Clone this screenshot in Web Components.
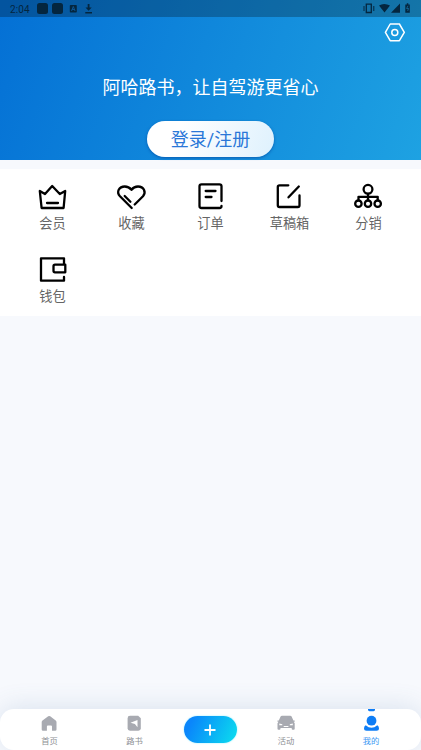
<!DOCTYPE html>
<html lang="zh-CN">
<head>
<meta charset="utf-8">
<title>我的</title>
<style>
html,body{margin:0;height:100%}
body{font-family:Roboto,"Noto Sans CJK SC",sans-serif;background:#f7f9fd;overflow:hidden}
</style>
</head>
<body>
<profile-page></profile-page>
<script>
function define(name, html) {
  const template = document.createElement('template');
  template.innerHTML = html;
  customElements.define(name, class extends HTMLElement {
    constructor() {
      super();
      this.attachShadow({mode: 'open'}).appendChild(template.content.cloneNode(true));
    }
  });
}

define('status-bar', `<style>
:host{display:flex;justify-content:space-between;height:17px;background:rgba(0,0,0,.25);color:#04263f}
.l{display:flex;align-items:center;padding-left:10px;font-size:10px;line-height:17px;letter-spacing:.1px}
.l span{padding-top:1px}
svg{display:block;fill:currentColor}
</style>
<div class="l"><span>2:04</span></div>
<svg width="58" height="17" viewBox="363 0 58 17"><path d="M366.3 4.2h5v8.3h-5z" fill="none" stroke="currentColor" stroke-width="1.3"/><path d="M364 6v5M373.8 6v5" stroke="currentColor"/><path d="M379 5.5q5-3 11 0l-5.500 7zM400 3.500v9.300h-9zM406.800 3.300h1.500v1.200h1.500v8.300h-4.500V4.500h1.500z"/><path d="M408 5.800l-1.400 2.700h1.900l-.8 2.400" stroke="#1672a3" stroke-width=".8" fill="none"/></svg>`);

define('status-icons', `<style>:host{display:block;margin-left:6px}svg{display:block;fill:currentColor}</style>
<svg width="60" height="17" viewBox="36 0 60 17"><rect x="37" y="3" width="11" height="11" rx="2.500"/><rect x="52" y="3" width="11" height="11" rx="2.500"/><rect x="69.800" y="5" width="7" height="7.500" rx=".8"/><path d="M71.500 11l1.800-4.500 1.800 4.500M72.100 9.500h2.400" stroke="#0c589a" fill="none" stroke-width=".9"/><path d="M87.700 4h1.800v3.500h2.200l-3.100 3.300-3.100-3.300h2.200zM85.300 12h6.700v1.400h-6.700z"/></svg>`);

define('login-button', `<style>
:host{display:block;width:127px;height:36px;border-radius:18px;background:linear-gradient(110deg,#fff 25%,#def1fd);box-shadow:0 1px 3px rgba(0,60,150,.6);color:#2a77d8;font-size:18px;line-height:38px;text-align:center}
</style><slot></slot>`);

define('page-header', `<style>
:host{display:flex;flex-direction:column;height:160px;background:linear-gradient(110.800deg,#0470d5,#1ea2e2);color:#fff}
.gear{display:flex;justify-content:flex-end;height:32px;padding:5px 15px 0 0;box-sizing:border-box}
svg{display:block}
p{margin:24px 0 0;font-size:18px;line-height:30px;text-align:center}
login-button{margin:18px auto 0}
</style>
<status-bar></status-bar>
<div class="gear"><svg width="22" height="21" viewBox="0 0 22 21" fill="none" stroke="#fff" stroke-width="1.500" stroke-linejoin="round"><path d="M6.200 2h9.200l4.900 8.400-4.900 8.300H6.200L1.400 10.400z"/><circle cx="10.800" cy="10.500" r="3"/></svg></div>
<p><slot></slot></p>
<login-button>登录/注册</login-button>`);

define('menu-item', `<style>
:host{display:flex;flex-direction:column;align-items:center;height:73px;font-size:13.200px;line-height:20px;color:#656565}
::slotted(svg){display:block;width:33px;height:32px;margin-bottom:2px;fill:none;stroke:#000;stroke-width:2.300;stroke-linecap:round;stroke-linejoin:round}
</style><slot name="icon"></slot><span><slot></slot></span>`);

define('menu-grid', `<style>
:host{display:grid;grid-template-columns:repeat(5,79px);align-content:start;margin-top:9px;padding:11px 13px 0;height:147px;box-sizing:border-box;background:#fff}
</style>
<menu-item><svg slot="icon" viewBox="0 0 33 32"><path d="M3.800 11l5.200 3 7.200-8 7.600 8 5.400-3-1.600 17h-22zM11 23h11"/></svg>会员</menu-item>
<menu-item><svg slot="icon" viewBox="0 0 33 32"><path d="M16.700 28L5 16.300C1 12 4 6.500 9.800 6.500c3 0 5 1.300 6.700 3.300C18 7.800 20 6.500 23 6.500c5.800 0 8.500 5.500 5 9.800l-8.300 8.200M9.700 16l5.700 5.700"/></svg>收藏</menu-item>
<menu-item><svg slot="icon" viewBox="0 0 33 32"><path d="M27.500 21V6.300q0-2-2-2h-18q-2 0-2 2V26q0 2 2 2h18q2 0 2-2M11.700 11h9.800M11.700 17h5.800"/></svg>订单</menu-item>
<menu-item><svg slot="icon" viewBox="0 0 33 32"><path d="M15.300 5.300H6.500q-1.700 0-1.700 1.700v18.300q0 1.700 1.700 1.700h18.300q1.700 0 1.700-1.700V15.500M15.500 17.300L25.800 6.500"/></svg>草稿箱</menu-item>
<menu-item><svg slot="icon" viewBox="0 0 33 32"><circle cx="16" cy="9.300" r="4.400"/><path d="M16 14v6M6.500 20v-3.200h19.200V20"/><circle cx="6.400" cy="23.700" r="3.200"/><circle cx="16" cy="23.700" r="3.200"/><circle cx="25.700" cy="23.700" r="3.200"/></svg>分销</menu-item>
<menu-item><svg slot="icon" viewBox="0 0 33 32"><path d="M28 10.700V5.300H5v22.400h23V24M19 11.700h10.300v7.600H19q-1.500 0-1.500-1.500v-4.600q0-1.500 1.500-1.500z"/></svg>钱包</menu-item>`);

define('nav-item', `<style>
:host{display:flex;flex-direction:column;align-items:center;font-size:8.300px;line-height:12px;color:#8d8f94}
:host([active]){color:#3c98f3}
::slotted(svg){display:block;width:25px;height:26px;fill:#a8aab1}
</style><slot name="icon"></slot><span><slot></slot></span>`);

define('tab-bar', `<style>
:host{display:grid;grid-template-columns:85px 85px 66px 86px 84px;padding-left:7px;height:41px;background:#fff;border-radius:14px;box-shadow:0 -2px 26px rgba(70,110,160,.16)}
.add{display:flex;justify-content:center;align-items:center;width:53px;height:27px;margin:7px auto 0;border-radius:14px;background:linear-gradient(115deg,#0a86fb 15%,#0bdfee);box-shadow:0 0 2px #8eefff}
</style>
<nav-item><svg slot="icon" viewBox="0 0 25 26"><path d="M11.200 7.300q1-.7 2 0l5.500 4.300q.8.600.8 1.500v7.300q0 1.300-1.300 1.300H15v-4.200q0-1-1-1h-3.100q-1 0-1 1v4.200H6q-1.300 0-1.300-1.300v-7.300q0-.9.800-1.500z"/></svg>首页</nav-item>
<nav-item><svg slot="icon" viewBox="0 0 25 26"><path d="M8 6.800h8.200l2.600 2.500v10q0 2.400-2.400 2.400H8q-2.400 0-2.400-2.400V9.200Q5.600 6.800 8 6.800z"/><path d="M8.500 13.800l7-2.800v7.300l-2.600-3.200z" fill="#fff"/></svg>路书</nav-item>
<div class="add"><svg width="12" height="12" viewBox="0 0 12 12"><path d="M6 .5v11M.5 6h11" stroke="#fff" stroke-width="1.800"/></svg></div>
<nav-item><svg slot="icon" viewBox="0 0 25 26"><path d="M6.600 7.500Q7 6.800 8 6.800h8.200q1 0 1.400.7l1.800 4h1.300v1.300h-1l1 1.500v5.500q0 1-1 1h-1q-1 0-1-1V19H6.500v.8q0 1-1 1h-1q-1 0-1-1v-5.500l1-1.500h-1v-1.300h1.300z"/><path d="M5.300 14.500l3 .7v1.100h-3zM18.800 14.500l-3 .7v1.100h3zM9.700 17h4.700v1H9.700z" fill="#fff"/></svg>活动</nav-item>
<nav-item active><svg slot="icon" viewBox="0 0 25 26" style="fill:#0f7df5"><path d="M9 0h7v.8q0 1.400-1.400 1.400h-4.200Q9 2.200 9 .8z"/><circle cx="12.500" cy="11.700" r="4.900"/><path d="M6.700 16.200q5.800 5 11.600 0 1.700.8 1.700 3 0 2.500-2.500 2.500h-10Q5 21.700 5 19.200q0-2.200 1.700-3z"/></svg>我的</nav-item>`);

define('profile-page', `<style>
:host{display:flex;flex-direction:column;height:100vh}
tab-bar{margin-top:auto}
</style>
<page-header>阿哈路书，让自驾游更省心</page-header>
<menu-grid></menu-grid>
<tab-bar></tab-bar>`);

const header = document.querySelector('profile-page').shadowRoot.querySelector('page-header');
header.shadowRoot.querySelector('status-bar').shadowRoot.querySelector('.l').append(document.createElement('status-icons'));
</script>
</body>
</html>
